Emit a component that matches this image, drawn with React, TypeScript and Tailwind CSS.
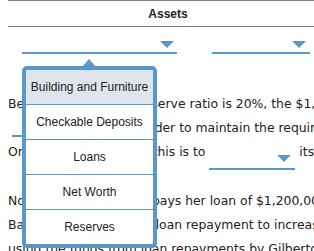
import * as React from 'react';

const BLUE = 'border-[#5897c7]';

function Caret() {
  return (
    <svg width="14" height="7" viewBox="0 0 14 7" className="block">
      <polygon points="0,0 14,0 7,7" fill="#5897c7" />
    </svg>
  );
}

const options = ['Building and Furniture', 'Checkable Deposits', 'Loans', 'Net Worth', 'Reserves'];

export default function App() {
  return (
    <div className="relative h-[251px] w-[314px] overflow-hidden bg-white text-[#222]">
      {/* Table header */}
      <div className="ml-2 w-[320px] font-['Liberation_Sans',Arial,sans-serif]">
        <div className="flex h-[27px] items-center justify-center border-y border-[#808080] text-[12px] font-bold">
          Assets
        </div>
        <div className="flex pt-[7px]">
          <span className={`ml-[14px] flex h-[20px] w-[155px] items-end justify-end border-b-2 ${BLUE} pb-[4px] pr-[3px]`}>
            <Caret />
          </span>
          <span className={`ml-[35px] flex h-[20px] w-[98px] items-end justify-end border-b-2 ${BLUE} pb-[4px] pr-[4px]`}>
            <Caret />
          </span>
        </div>
      </div>

      {/* Question text */}
      <div className="mt-[38px] pl-2 font-['DejaVu_Sans',Verdana,sans-serif] text-[12.4px] leading-[24px] whitespace-nowrap">
        <div className="h-[24px]">Because its required reserve ratio is 20%, the $1,000 increase</div>
        <div className="h-[24px]">
          <span className={`ml-1 inline-block h-[20px] w-[111px] border-b-2 ${BLUE} align-[-5px]`} /> in order to maintain the required reserve ratio.
        </div>
        <div className="h-[24px]">
          One way banks can do this is to{' '}
          <span className={`inline-flex h-[20px] w-[86px] items-end justify-end border-b-2 ${BLUE} pb-[6px] pr-[4px] align-[-6px]`}>
            <Caret />
          </span>{' '}
          its reserves.
        </div>
        <div className="mt-[25px] h-[24px]">Now, suppose Gilberto pays her loan of $1,200,000 back</div>
        <div className="h-[24px]">Bank decides to use its loan repayment to increase its reserves</div>
        <div className="h-[24px]">using the funds from loan repayments by Gilberto to make</div>
      </div>

      {/* Open dropdown menu */}
      <div className="absolute left-[82px] top-[59px]">
        <svg width="14" height="8" viewBox="0 0 14 8" className="block">
          <polygon points="7,0 14,8 0,8" fill="#5897c7" />
        </svg>
      </div>
      <div className={`absolute left-[22px] top-[66px] w-[135px] overflow-hidden rounded-[5px] border-4 ${BLUE} bg-white font-['Liberation_Sans',Arial,sans-serif] text-[12px]`}>
        {options.map((o, i) => (
          <div
            key={o}
            className={`flex items-center justify-center ${i > 0 ? `h-[35px] border-t ${BLUE}` : 'h-[34px] bg-[#dde5ea]'}`}
          >
            {o}
          </div>
        ))}
      </div>
    </div>
  );
}
